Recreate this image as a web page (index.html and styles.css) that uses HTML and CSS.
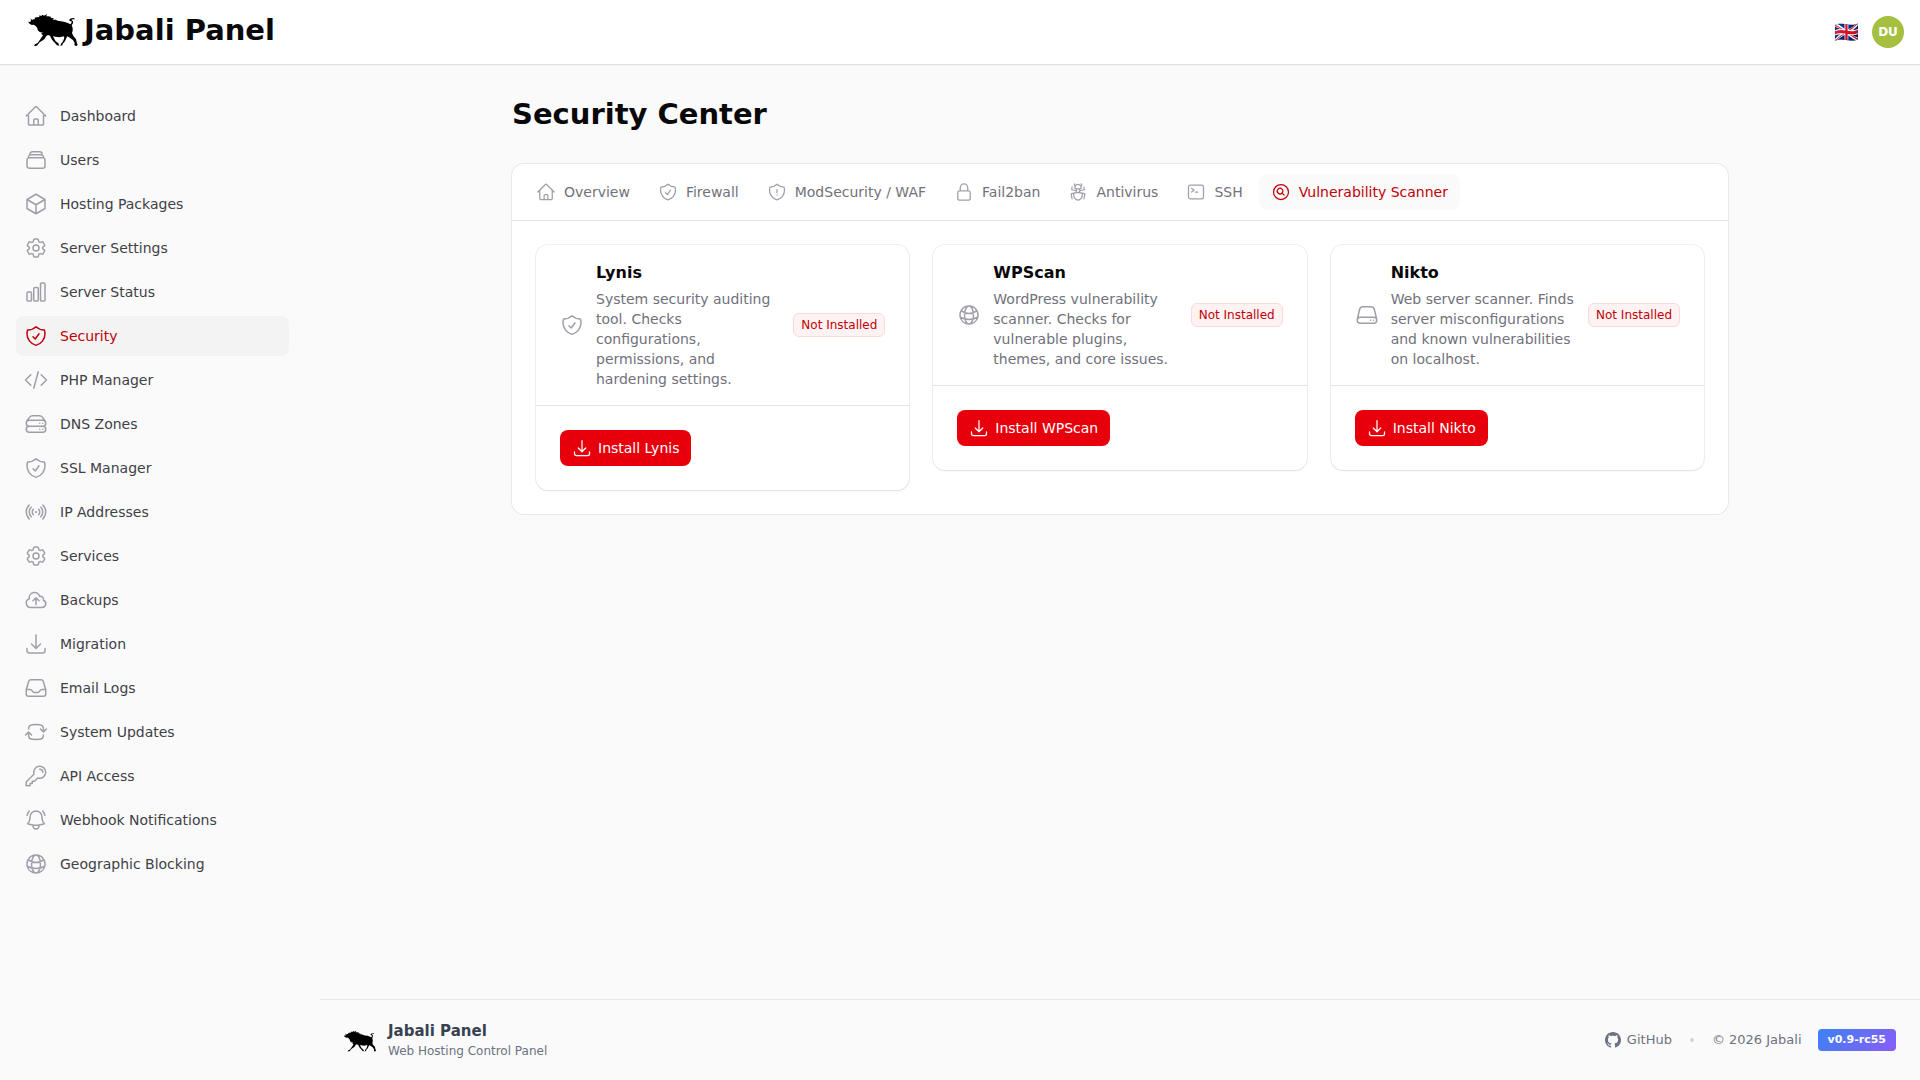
FILE: index.html
```html
<!DOCTYPE html>
<html lang="en">
<head>
<meta charset="utf-8">
<meta name="viewport" content="width=device-width, initial-scale=1">
<title>Security Center - Jabali Panel</title>
<link rel="stylesheet" href="styles.css">
</head>
<body>
<svg class="sprite" aria-hidden="true">
  <symbol id="home" viewBox="0 0 24 24"><path d="m2.25 12 8.954-8.955c.44-.439 1.152-.439 1.591 0L21.75 12M4.5 9.75v10.125c0 .621.504 1.125 1.125 1.125H9.75v-4.875c0-.621.504-1.125 1.125-1.125h2.25c.621 0 1.125.504 1.125 1.125V21h4.125c.621 0 1.125-.504 1.125-1.125V9.75M8.25 21h8.25"/></symbol>
  <symbol id="stack" viewBox="0 0 24 24"><path d="M6 6.878V6a2.25 2.25 0 0 1 2.25-2.25h7.5A2.25 2.25 0 0 1 18 6v.878m-12 0c.235-.083.487-.128.75-.128h10.5c.263 0 .515.045.75.128m-12 0A2.25 2.25 0 0 0 4.5 9v.878m13.5-3A2.25 2.25 0 0 1 19.5 9v.878m0 0a2.246 2.246 0 0 0-.75-.128H5.25c-.263 0-.515.045-.75.128m15 0A2.25 2.25 0 0 1 21 12v6a2.25 2.25 0 0 1-2.25 2.25H5.25A2.25 2.25 0 0 1 3 18v-6c0-.98.626-1.813 1.5-2.122"/></symbol>
  <symbol id="cube" viewBox="0 0 24 24"><path d="m21 7.5-9-5.25L3 7.5m18 0-9 5.25m9-5.25v9l-9 5.25M3 7.5l9 5.25M3 7.5v9l9 5.25m0-9v9"/></symbol>
  <symbol id="cog" viewBox="0 0 24 24"><path d="M9.594 3.94c.09-.542.56-.94 1.11-.94h2.593c.55 0 1.02.398 1.11.94l.213 1.281c.063.374.313.686.645.87.074.04.147.083.22.127.325.196.72.257 1.075.124l1.217-.456a1.125 1.125 0 0 1 1.37.49l1.296 2.247a1.125 1.125 0 0 1-.26 1.431l-1.003.827c-.293.241-.438.613-.43.992a7.723 7.723 0 0 1 0 .255c-.008.378.137.75.43.991l1.004.827c.424.35.534.955.26 1.43l-1.298 2.247a1.125 1.125 0 0 1-1.369.491l-1.217-.456c-.355-.133-.75-.072-1.076.124a6.47 6.47 0 0 1-.22.128c-.331.183-.581.495-.644.869l-.213 1.281c-.09.543-.56.94-1.11.94h-2.594c-.55 0-1.019-.398-1.11-.94l-.213-1.281c-.062-.374-.312-.686-.644-.87a6.52 6.52 0 0 1-.22-.127c-.325-.196-.72-.257-1.076-.124l-1.217.456a1.125 1.125 0 0 1-1.369-.49l-1.297-2.247a1.125 1.125 0 0 1 .26-1.431l1.004-.827c.292-.24.437-.613.43-.991a6.932 6.932 0 0 1 0-.255c.007-.38-.138-.751-.43-.992l-1.004-.827a1.125 1.125 0 0 1-.26-1.43l1.297-2.247a1.125 1.125 0 0 1 1.37-.491l1.216.456c.356.133.751.072 1.076-.124.072-.044.146-.086.22-.128.332-.183.582-.495.644-.869l.214-1.28ZM15 12a3 3 0 1 1-6 0 3 3 0 0 1 6 0Z"/></symbol>
  <symbol id="chart" viewBox="0 0 24 24"><path d="M3 13.125C3 12.504 3.504 12 4.125 12h2.25c.621 0 1.125.504 1.125 1.125v6.75C7.5 20.496 6.996 21 6.375 21h-2.25A1.125 1.125 0 0 1 3 19.875v-6.75ZM9.75 8.625c0-.621.504-1.125 1.125-1.125h2.25c.621 0 1.125.504 1.125 1.125v11.25c0 .621-.504 1.125-1.125 1.125h-2.25a1.125 1.125 0 0 1-1.125-1.125V8.625ZM16.5 4.125c0-.621.504-1.125 1.125-1.125h2.25C20.496 3 21 3.504 21 4.125v15.75c0 .621-.504 1.125-1.125 1.125h-2.25a1.125 1.125 0 0 1-1.125-1.125V4.125Z"/></symbol>
  <symbol id="shield-check" viewBox="0 0 24 24"><path d="M9 12.75 11.25 15 15 9.75m-3-7.036A11.959 11.959 0 0 1 3.598 6 11.99 11.99 0 0 0 3 9.749c0 5.592 3.824 10.29 9 11.623 5.176-1.332 9-6.03 9-11.622 0-1.31-.21-2.571-.598-3.751h-.152c-3.196 0-6.1-1.248-8.25-3.285Z"/></symbol>
  <symbol id="shield-alert" viewBox="0 0 24 24"><path d="M12 9v3.75m0-10.036A11.959 11.959 0 0 1 3.598 6 11.99 11.99 0 0 0 3 9.75c0 5.592 3.824 10.29 9 11.622 5.176-1.332 9-6.03 9-11.622 0-1.31-.21-2.57-.598-3.75h-.152c-3.196 0-6.1-1.25-8.25-3.286Zm0 13.036h.008v.008H12v-.008Z"/></symbol>
  <symbol id="code" viewBox="0 0 24 24"><path d="M17.25 6.75 22.5 12l-5.25 5.25m-10.5 0L1.5 12l5.25-5.25m7.5-3-4.5 16.5"/></symbol>
  <symbol id="servers" viewBox="0 0 24 24"><path d="M5.25 14.25h13.5m-13.5 0a3 3 0 0 1-3-3m3 3a3 3 0 1 0 0 6h13.5a3 3 0 1 0 0-6m-16.5-3a3 3 0 0 1 3-3h13.5a3 3 0 0 1 3 3m-19.5 0a4.5 4.5 0 0 1 .9-2.7L5.737 5.1a3.375 3.375 0 0 1 2.7-1.35h7.126c1.062 0 2.062.5 2.7 1.35l2.587 3.45a4.5 4.5 0 0 1 .9 2.7m0 0a3 3 0 0 1-3 3m0 3h.008v.008h-.008v-.008Zm0-6h.008v.008h-.008v-.008Zm-3 6h.008v.008h-.008v-.008Zm0-6h.008v.008h-.008v-.008Z"/></symbol>
  <symbol id="signal" viewBox="0 0 24 24"><path d="M9.348 14.652a3.75 3.75 0 0 1 0-5.304m5.304 0a3.75 3.75 0 0 1 0 5.304m-7.425 2.121a6.75 6.75 0 0 1 0-9.546m9.546 0a6.75 6.75 0 0 1 0 9.546M5.106 18.894c-3.808-3.807-3.808-9.98 0-13.788m13.788 0c3.808 3.807 3.808 9.98 0 13.788M12 12h.008v.008H12V12Zm.375 0a.375.375 0 1 1-.75 0 .375.375 0 0 1 .75 0Z"/></symbol>
  <symbol id="cloud-up" viewBox="0 0 24 24"><path d="M12 16.5V9.75m0 0 3 3m-3-3-3 3M6.75 19.5a4.5 4.5 0 0 1-1.41-8.775 5.25 5.25 0 0 1 10.233-2.33 3 3 0 0 1 3.758 3.848A3.752 3.752 0 0 1 18 19.5H6.75Z"/></symbol>
  <symbol id="download" viewBox="0 0 24 24"><path d="M3 16.5v2.25A2.25 2.25 0 0 0 5.25 21h13.5A2.25 2.25 0 0 0 21 18.75V16.5M16.5 12 12 16.5m0 0L7.5 12m4.5 4.5V3"/></symbol>
  <symbol id="inbox" viewBox="0 0 24 24"><path d="M2.25 13.5h3.86a2.25 2.25 0 0 1 2.012 1.244l.256.512a2.25 2.25 0 0 0 2.013 1.244h3.218a2.25 2.25 0 0 0 2.013-1.244l.256-.512a2.25 2.25 0 0 1 2.013-1.244h3.859m-19.5.338V18a2.25 2.25 0 0 0 2.25 2.25h15A2.25 2.25 0 0 0 21.75 18v-4.162c0-.224-.034-.447-.1-.661L19.24 5.338a2.25 2.25 0 0 0-2.15-1.588H6.911a2.25 2.25 0 0 0-2.15 1.588L2.35 13.177a2.25 2.25 0 0 0-.1.661Z"/></symbol>
  <symbol id="refresh" viewBox="0 0 24 24"><path d="M19.5 12c0-1.232-.046-2.453-.138-3.662a4.006 4.006 0 0 0-3.7-3.7 48.678 48.678 0 0 0-7.324 0 4.006 4.006 0 0 0-3.7 3.7c-.017.22-.032.441-.046.662M19.5 12l3-3m-3 3-3-3m-12 3c0 1.232.046 2.453.138 3.662a4.006 4.006 0 0 0 3.7 3.7 48.656 48.656 0 0 0 7.324 0 4.006 4.006 0 0 0 3.7-3.7c.017-.22.032-.441.046-.662M4.5 12l3 3m-3-3-3 3"/></symbol>
  <symbol id="key" viewBox="0 0 24 24"><path d="M15.75 5.25a3 3 0 0 1 3 3m3 0a6 6 0 0 1-7.029 5.912c-.563-.097-1.159.026-1.563.43L10.5 17.25H8.25v2.25H6v2.25H2.25v-2.818c0-.597.237-1.17.659-1.591l6.499-6.499c.404-.404.527-1 .43-1.563A6 6 0 1 1 21.75 8.25Z"/></symbol>
  <symbol id="bell" viewBox="0 0 24 24"><path d="M14.857 17.082a23.848 23.848 0 0 0 5.454-1.31A8.967 8.967 0 0 1 18 9.75V9A6 6 0 0 0 6 9v.75a8.967 8.967 0 0 1-2.312 6.022c1.733.64 3.56 1.085 5.455 1.31m5.714 0a24.255 24.255 0 0 1-5.714 0m5.714 0a3 3 0 1 1-5.714 0M3.124 7.5A8.969 8.969 0 0 1 5.292 3m13.416 0a8.969 8.969 0 0 1 2.168 4.5"/></symbol>
  <symbol id="globe" viewBox="0 0 24 24"><path d="M12 21a9.004 9.004 0 0 0 8.716-6.747M12 21a9.004 9.004 0 0 1-8.716-6.747M12 21c2.485 0 4.5-4.03 4.5-9S14.485 3 12 3m0 18c-2.485 0-4.5-4.03-4.5-9S9.515 3 12 3m0 0a8.997 8.997 0 0 1 7.843 4.582M12 3a8.997 8.997 0 0 0-7.843 4.582m15.686 0A11.953 11.953 0 0 1 12 10.5c-2.998 0-5.74-1.1-7.843-2.918m15.686 0A8.959 8.959 0 0 1 21 12c0 .778-.099 1.533-.284 2.253m0 0A17.919 17.919 0 0 1 12 16.5c-3.162 0-6.133-.815-8.716-2.247m0 0A9.015 9.015 0 0 1 3 12c0-1.605.42-3.113 1.157-4.418"/></symbol>
  <symbol id="lock" viewBox="0 0 24 24"><path d="M16.5 10.5V6.75a4.5 4.5 0 1 0-9 0v3.75m-.75 11.25h10.5a2.25 2.25 0 0 0 2.25-2.25v-6.75a2.25 2.25 0 0 0-2.25-2.25H6.75a2.25 2.25 0 0 0-2.25 2.25v6.75a2.25 2.25 0 0 0 2.25 2.25Z"/></symbol>
  <symbol id="bug" viewBox="0 0 24 24"><path d="M12 12.75c1.148 0 2.278.08 3.383.237 1.037.146 1.866.966 1.866 2.013 0 3.728-2.35 6.75-5.25 6.75S6.75 18.728 6.75 15c0-1.046.83-1.867 1.866-2.013A24.204 24.204 0 0 1 12 12.75Zm0 0c2.883 0 5.647.508 8.207 1.44a23.91 23.91 0 0 1-1.152 6.06M12 12.75c-2.883 0-5.647.508-8.208 1.44.125 2.104.52 4.136 1.153 6.06M12 12.75a2.25 2.25 0 0 0 2.248-2.354M12 12.75a2.25 2.25 0 0 1-2.248-2.354M12 8.25c.995 0 1.971-.08 2.922-.236.403-.066.74-.358.795-.762a3.778 3.778 0 0 0-.399-2.25M12 8.25c-.995 0-1.97-.08-2.922-.236-.402-.066-.74-.358-.795-.762a3.734 3.734 0 0 1 .4-2.253M12 8.25a2.25 2.25 0 0 0-2.248 2.146M12 8.25a2.25 2.25 0 0 1 2.248 2.146M8.683 5a6.032 6.032 0 0 1-1.155-1.002c.07-.63.27-1.222.574-1.747m.581 2.749A3.75 3.75 0 0 1 15.318 5m0 0c.427-.283.815-.62 1.155-.999a4.471 4.471 0 0 0-.575-1.752M4.921 6a24.048 24.048 0 0 0-.392 3.314c1.668.546 3.416.914 5.223 1.082M19.08 6c.205 1.08.337 2.187.392 3.314a23.882 23.882 0 0 1-5.223 1.082"/></symbol>
  <symbol id="terminal" viewBox="0 0 24 24"><path d="m6.75 7.5 3 2.25-3 2.25m4.5 0h3m-9 8.25h13.5A2.25 2.25 0 0 0 21 18V6a2.25 2.25 0 0 0-2.25-2.25H5.25A2.25 2.25 0 0 0 3 6v12a2.25 2.25 0 0 0 2.25 2.25Z"/></symbol>
  <symbol id="search-circle" viewBox="0 0 24 24"><path d="m15.75 15.75-2.489-2.489m0 0a3.375 3.375 0 1 0-4.773-4.773 3.375 3.375 0 0 0 4.774 4.774ZM21 12a9 9 0 1 1-18 0 9 9 0 0 1 18 0Z"/></symbol>
  <symbol id="drive" viewBox="0 0 24 24"><path d="M21.75 17.25v-.228a4.5 4.5 0 0 0-.12-1.03l-2.268-9.64a3.375 3.375 0 0 0-3.285-2.602H7.923a3.375 3.375 0 0 0-3.285 2.602l-2.268 9.64a4.5 4.5 0 0 0-.12 1.03v.228m19.5 0a3 3 0 0 1-3 3H5.25a3 3 0 0 1-3-3m19.5 0a3 3 0 0 0-3-3H5.25a3 3 0 0 0-3 3m16.5 0h.008v.008h-.008v-.008Zm-3 0h.008v.008h-.008v-.008Z"/></symbol>
  <symbol id="boar" viewBox="84 42 148 96"><path d="M84 65 88 66 92 64 91 55 95 60 99 58 104 58 103 53 109 52 117 51 117 46 123 48 126 44 131 47 141 42 137 49 144 49 154 51 150 54 161 55 157 59 166 59 172 62 182 64 194 66 204 70 210 73 214 68 213 64 207 62 208 57 214 55 221 54 224 58 217 58 213 60 218 64 218 70 214 76 217 84 217 92 215 99 219 108 227 117 229 127 232 135 228 138 222 136 223 129 218 120 206 112 202 109 198 114 194 124 187 131 186 136 180 138 182 131 188 124 192 113 190 109 178 112 164 110 158 108 161 115 166 124 174 130 177 137 170 136 163 128 155 119 149 107 143 105 138 108 132 118 118 127 110 137 101 138 104 133 112 129 120 118 128 106 122 101 128 98 118 96 112 91 111 84 106 78 100 74 94 75 88 71 85 68Z"/></symbol>
</svg>

<header class="topbar">
  <a class="brand" href="#"><svg class="brand-mark" aria-hidden="true"><use href="#boar"/></svg><span>Jabali Panel</span></a>
  <div class="topbar-end">
    <button class="lang" type="button" aria-label="Language">🇬🇧</button>
    <button class="avatar" type="button">DU</button>
  </div>
</header>

<div class="layout">
  <nav class="sidebar" aria-label="Main">
    <a class="nav-item" href="#"><svg class="icon"><use href="#home"/></svg>Dashboard</a>
    <a class="nav-item" href="#"><svg class="icon"><use href="#stack"/></svg>Users</a>
    <a class="nav-item" href="#"><svg class="icon"><use href="#cube"/></svg>Hosting Packages</a>
    <a class="nav-item" href="#"><svg class="icon"><use href="#cog"/></svg>Server Settings</a>
    <a class="nav-item" href="#"><svg class="icon"><use href="#chart"/></svg>Server Status</a>
    <a class="nav-item is-active" href="#" aria-current="page"><svg class="icon"><use href="#shield-check"/></svg>Security</a>
    <a class="nav-item" href="#"><svg class="icon"><use href="#code"/></svg>PHP Manager</a>
    <a class="nav-item" href="#"><svg class="icon"><use href="#servers"/></svg>DNS Zones</a>
    <a class="nav-item" href="#"><svg class="icon"><use href="#shield-check"/></svg>SSL Manager</a>
    <a class="nav-item" href="#"><svg class="icon"><use href="#signal"/></svg>IP Addresses</a>
    <a class="nav-item" href="#"><svg class="icon"><use href="#cog"/></svg>Services</a>
    <a class="nav-item" href="#"><svg class="icon"><use href="#cloud-up"/></svg>Backups</a>
    <a class="nav-item" href="#"><svg class="icon"><use href="#download"/></svg>Migration</a>
    <a class="nav-item" href="#"><svg class="icon"><use href="#inbox"/></svg>Email Logs</a>
    <a class="nav-item" href="#"><svg class="icon"><use href="#refresh"/></svg>System Updates</a>
    <a class="nav-item" href="#"><svg class="icon"><use href="#key"/></svg>API Access</a>
    <a class="nav-item" href="#"><svg class="icon"><use href="#bell"/></svg>Webhook Notifications</a>
    <a class="nav-item" href="#"><svg class="icon"><use href="#globe"/></svg>Geographic Blocking</a>
  </nav>

  <div class="content">
    <main class="page">
      <h1>Security Center</h1>
      <section class="panel">
        <div class="tabs" role="tablist">
          <button class="tab" type="button" role="tab"><svg class="icon"><use href="#home"/></svg>Overview</button>
          <button class="tab" type="button" role="tab"><svg class="icon"><use href="#shield-check"/></svg>Firewall</button>
          <button class="tab" type="button" role="tab"><svg class="icon"><use href="#shield-alert"/></svg>ModSecurity / WAF</button>
          <button class="tab" type="button" role="tab"><svg class="icon"><use href="#lock"/></svg>Fail2ban</button>
          <button class="tab" type="button" role="tab"><svg class="icon"><use href="#bug"/></svg>Antivirus</button>
          <button class="tab" type="button" role="tab"><svg class="icon"><use href="#terminal"/></svg>SSH</button>
          <button class="tab is-active" type="button" role="tab" aria-selected="true"><svg class="icon"><use href="#search-circle"/></svg>Vulnerability Scanner</button>
        </div>
        <div class="cards">
          <article class="card">
            <header class="card-header">
              <svg class="icon"><use href="#shield-check"/></svg>
              <div class="card-text">
                <h2>Lynis</h2>
                <p>System security auditing tool. Checks configurations, permissions, and hardening settings.</p>
              </div>
              <span class="badge">Not Installed</span>
            </header>
            <div class="card-body"><button class="btn" type="button"><svg class="icon"><use href="#download"/></svg>Install Lynis</button></div>
          </article>
          <article class="card">
            <header class="card-header">
              <svg class="icon"><use href="#globe"/></svg>
              <div class="card-text">
                <h2>WPScan</h2>
                <p>WordPress vulnerability scanner. Checks for vulnerable plugins, themes, and core issues.</p>
              </div>
              <span class="badge">Not Installed</span>
            </header>
            <div class="card-body"><button class="btn" type="button"><svg class="icon"><use href="#download"/></svg>Install WPScan</button></div>
          </article>
          <article class="card">
            <header class="card-header">
              <svg class="icon"><use href="#drive"/></svg>
              <div class="card-text">
                <h2>Nikto</h2>
                <p>Web server scanner. Finds server misconfigurations and known vulnerabilities on localhost.</p>
              </div>
              <span class="badge">Not Installed</span>
            </header>
            <div class="card-body"><button class="btn" type="button"><svg class="icon"><use href="#download"/></svg>Install Nikto</button></div>
          </article>
        </div>
      </section>
    </main>

    <footer class="footer">
      <div class="footer-brand">
        <svg class="footer-mark" aria-hidden="true"><use href="#boar"/></svg>
        <div>
          <div class="footer-title">Jabali Panel</div>
          <div class="footer-sub">Web Hosting Control Panel</div>
        </div>
      </div>
      <div class="footer-meta">
        <a class="github" href="#"><svg class="github-mark" viewBox="0 0 24 24" aria-hidden="true"><path d="M12 0c-6.626 0-12 5.373-12 12 0 5.302 3.438 9.8 8.207 11.387.599.111.793-.261.793-.577v-2.234c-3.338.726-4.033-1.416-4.033-1.416-.546-1.387-1.333-1.756-1.333-1.756-1.089-.745.083-.729.083-.729 1.205.084 1.839 1.237 1.839 1.237 1.07 1.834 2.807 1.304 3.492.997.107-.775.418-1.305.762-1.604-2.665-.305-5.467-1.334-5.467-5.931 0-1.311.469-2.381 1.236-3.221-.124-.303-.535-1.524.117-3.176 0 0 1.008-.322 3.301 1.23.957-.266 1.983-.399 3.003-.404 1.02.005 2.047.138 3.006.404 2.291-1.552 3.297-1.23 3.297-1.23.653 1.653.242 2.874.118 3.176.77.84 1.235 1.911 1.235 3.221 0 4.609-2.807 5.624-5.479 5.921.43.372.823 1.102.823 2.222v3.293c0 .319.192.694.801.576 4.765-1.589 8.199-6.086 8.199-11.386 0-6.627-5.373-12-12-12z"/></svg>GitHub</a>
        <span class="dot"></span>
        <span>© 2026 Jabali</span>
        <span class="version">v0.9-rc55</span>
      </div>
    </footer>
  </div>
</div>
</body>
</html>
```
FILE: styles.css
```css
*, *::before, *::after { box-sizing: border-box; }

body {
  margin: 0;
  min-height: 100vh;
  display: flex;
  flex-direction: column;
  background: #fafafa;
  color: #09090b;
  font-family: "DejaVu Sans", sans-serif;
  font-size: 14px;
  line-height: 20px;
}

h1, h2, p { margin: 0; }
a { color: inherit; text-decoration: none; }
button { border: 0; background: none; color: inherit; font: inherit; cursor: pointer; }

.sprite { display: none; }

.icon {
  flex: none;
  width: 24px;
  height: 24px;
  fill: none;
  stroke: #9f9fa9;
  stroke-width: 1.5;
  stroke-linecap: round;
  stroke-linejoin: round;
}

/* Top bar */
.topbar {
  display: flex;
  align-items: center;
  justify-content: space-between;
  height: 64px;
  padding: 0 16px 0 28px;
  background: #fff;
  box-shadow: 0 0 0 1px rgba(9, 9, 11, .05), 0 1px 2px rgba(0, 0, 0, .07);
}

.brand {
  display: flex;
  align-items: center;
  gap: 6px;
  font-size: 29px;
  font-weight: 700;
  line-height: 36px;
}

.brand span { padding-bottom: 4px; }
.brand-mark { width: 50px; height: 32px; margin-bottom: 4px; }

.topbar-end { display: flex; align-items: center; gap: 13px; }

.lang { padding: 0; font-size: 20px; line-height: 28px; }

.avatar {
  width: 32px;
  height: 32px;
  padding: 0;
  border-radius: 50%;
  background: #a5bf41;
  color: #fff;
  font-size: 12px;
  font-weight: 700;
}

/* Layout */
.layout { display: flex; flex: 1; }

.sidebar {
  display: flex;
  flex-direction: column;
  flex: none;
  gap: 4px;
  width: 320px;
  padding: 32px 31px 32px 16px;
}

.nav-item {
  display: flex;
  align-items: center;
  gap: 12px;
  padding: 8px;
  border-radius: 8px;
  color: #3f3f46;
}

.nav-item.is-active { background: #f3f3f3; color: #c10007; }
.nav-item.is-active .icon, .tab.is-active .icon { stroke: #c10007; }

.content { display: flex; flex: 1; flex-direction: column; min-width: 0; }

.page {
  flex: 1;
  width: 100%;
  max-width: 1280px;
  margin: 0 auto;
  padding: 32px;
}

h1 { margin-bottom: 32px; font-size: 29px; line-height: 36px; }

/* Tabbed panel */
.panel, .card {
  border-radius: 12px;
  background: #fff;
  box-shadow: 0 0 0 1px rgba(9, 9, 11, .07);
}

.card { box-shadow: 0 0 0 1px rgba(9, 9, 11, .05), 0 1px 2px rgba(0, 0, 0, .08); }

.tabs {
  display: flex;
  gap: 4px;
  padding: 10px 12px;
  border-bottom: 1px solid #e4e4e7;
}

.tab {
  display: flex;
  align-items: center;
  gap: 8px;
  padding: 8px 12px;
  border-radius: 8px;
  color: #71717b;
}

.tab .icon, .btn .icon { width: 20px; height: 20px; }
.tab.is-active { background: #fafafa; color: #c10007; }

.cards {
  display: grid;
  grid-template-columns: repeat(3, minmax(0, 1fr));
  align-items: start;
  gap: 24px;
  padding: 24px;
}

.card-header {
  display: flex;
  align-items: center;
  gap: 12px;
  padding: 16px 24px;
  border-bottom: 1px solid #e4e4e7;
}

.card-text { display: grid; flex: 1; gap: 4px; min-width: 0; }
.card-text h2 { font-size: 16px; line-height: 24px; }
.card-text p { color: #71717b; }

.badge {
  flex: none;
  padding: 3px 7px;
  border: 1px solid #fcdadb;
  border-radius: 6px;
  background: #fef2f2;
  color: #c10007;
  font-size: 12px;
  line-height: 16px;
}

.card-body { padding: 24px; }

.btn {
  display: flex;
  align-items: center;
  gap: 6px;
  padding: 8px 12px;
  border-radius: 8px;
  background: #e7000b;
  color: #fff;
}

.btn .icon { stroke: #fff; }

/* Footer */
.footer {
  display: flex;
  align-items: center;
  justify-content: space-between;
  padding: 19px 24px;
  border-top: 1px solid #e9e9eb;
  color: #6b7280;
  font-size: 13px;
}

.footer-brand { display: flex; align-items: center; gap: 12px; padding-top: 2px; }
.footer-mark { width: 32px; height: 22px; }
.footer-title { color: #374151; font-size: 15px; font-weight: 700; }
.footer-sub { font-size: 12px; }

.footer-meta { display: flex; align-items: center; gap: 16px; }
.github { display: flex; align-items: center; gap: 6px; }
.github-mark { width: 16px; height: 16px; fill: #6b7280; }
.dot { width: 4px; height: 4px; margin: 0 2px; border-radius: 50%; background: #d1d5db; }

.version {
  padding: 3px 10px;
  border-radius: 4px;
  background: linear-gradient(135deg, #3b82f6, #8b5cf6);
  color: #fff;
  font-size: 11px;
  font-weight: 700;
  line-height: 16px;
}
```
